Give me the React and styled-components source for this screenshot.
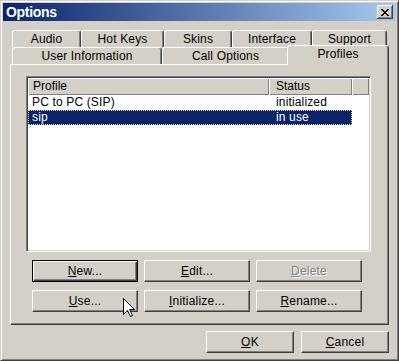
import React from "react";
import styled, { createGlobalStyle } from "styled-components";

const Global = createGlobalStyle`
  html, body { margin: 0; padding: 0; background: #d4d0c8; }
  * { box-sizing: border-box; }
`;

const FONT = `"Liberation Sans", Arial, sans-serif`;

const Window = styled.div`
  position: relative;
  width: 399px;
  height: 361px;
  background: #d4d0c8;
  border: 1px solid;
  border-color: #d4d0c8 #404040 #404040 #d4d0c8;
  box-shadow: inset 1px 1px #fff, inset -1px -1px #808080;
  padding: 2px;
  display: flex;
  flex-direction: column;
  font-family: ${FONT};
  font-size: 12px;
  color: #000;
`;

const TitleBar = styled.div`
  height: 18px;
  background: linear-gradient(to right, #0a246a, #a6caf0);
  display: flex;
  align-items: flex-start;
  justify-content: space-between;
`;

const Title = styled.div`
  color: #fff;
  font-weight: bold;
  font-size: 14px;
  letter-spacing: -0.3px;
  line-height: 18px;
  padding-left: 3px;
`;

const CloseBtn = styled.div`
  width: 16px;
  height: 14px;
  margin: 2px 3px 0 0;
  background: #d4d0c8;
  box-shadow: inset -1px -1px #404040, inset 1px 1px #fff, inset -2px -2px #808080;
  display: flex;
  align-items: center;
  justify-content: center;
`;

const Body = styled.div`
  flex: 1;
  display: flex;
  flex-direction: column;
  padding: 9px 7px 0 7px;
`;

const TabRow = styled.div`
  display: flex;
  height: 17px;
  padding-left: 2px;
`;

const Tab = styled.div`
  width: ${(p) => p.$w}px;
  height: ${(p) => (p.$active ? 20 : 17)}px;
  margin: ${(p) => (p.$active ? "-2px -2px -1px -2px" : "0")};
  ${(p) => (p.$active ? "position: relative; z-index: 1;" : "")}
  background: #d4d0c8;
  border-top: 1px solid #fff;
  border-left: 1px solid #fff;
  border-right: 1px solid #404040;
  border-top-left-radius: 3px;
  border-top-right-radius: 3px;
  box-shadow: inset -1px 0 #808080;
  display: flex;
  justify-content: center;
  align-items: flex-start;
  line-height: 14px;
  padding-top: 1px;
  white-space: nowrap;
  letter-spacing: 0.15px;
`;

const Panel = styled.div`
  height: 261px;
  border-top: 1px solid #fff;
  border-left: 1px solid #fff;
  border-right: 1px solid #404040;
  border-bottom: 1px solid #404040;
  box-shadow: inset -1px -1px #808080;
  padding: 11px 0 0 15px;
  display: flex;
  flex-direction: column;
`;

const ListBox = styled.div`
  width: 345px;
  height: 176px;
  background: #fff;
  border: 1px solid;
  border-color: #808080 #fff #fff #808080;
  box-shadow: inset 1px 1px #404040, inset -1px -1px #d4d0c8;
  padding: 1px;
  display: flex;
  flex-direction: column;
`;

const HeaderRow = styled.div`
  display: flex;
  height: 17px;
`;

const HeaderCell = styled.div`
  width: ${(p) => (p.$w ? `${p.$w}px` : "auto")};
  flex: ${(p) => (p.$w ? "none" : "1")};
  background: #d4d0c8;
  box-shadow: inset 1px 1px #fff, inset -1px -1px #808080;
  padding-left: ${(p) => p.$pad || 0}px;
  line-height: 16px;
  white-space: nowrap;
`;

const Row = styled.div`
  display: flex;
  width: 324px;
  height: 15px;
  line-height: 13px;
  background: ${(p) => (p.$sel ? "#0a246a" : "transparent")};
  color: ${(p) => (p.$sel ? "#fff" : "#000")};
  border: 1px dotted ${(p) => (p.$sel ? "#f5db95" : "transparent")};
`;

const Cell = styled.div`
  width: ${(p) => p.$w}px;
  padding-left: ${(p) => p.$pad}px;
  white-space: nowrap;
  letter-spacing: 0.15px;
`;

const ButtonGrid = styled.div`
  display: grid;
  grid-template-columns: repeat(3, 106px);
  grid-auto-rows: 22px;
  column-gap: 6px;
  row-gap: 8px;
  margin: 8px 0 0 6px;
`;

const Button = styled.div`
  background: #d4d0c8;
  border: 1px solid;
  border-color: ${(p) => (p.$default ? "#000" : "#fff #404040 #404040 #fff")};
  box-shadow: ${(p) =>
    p.$default
      ? "inset 1px 1px #fff, inset -1px -1px #404040, inset -2px -2px #808080"
      : "inset -1px -1px #808080"};
  display: flex;
  align-items: center;
  justify-content: center;
  color: ${(p) => (p.$disabled ? "#808080" : "#000")};
  text-shadow: ${(p) => (p.$disabled ? "1px 1px 0 #fff" : "none")};
  white-space: nowrap;
  letter-spacing: 0.2px;
`;

const BottomBar = styled.div`
  display: flex;
  justify-content: flex-end;
  gap: 7px;
  margin-top: 6px;
`;

const BottomButton = styled(Button)`
  width: 88px;
  height: 22px;
`;

const Cursor = styled.svg`
  position: absolute;
  left: 122px;
  top: 297px;
  width: 12px;
  height: 20px;
`;

const rowOne = [
  ["Audio", 69],
  ["Hot Keys", 83],
  ["Skins", 68],
  ["Interface", 80],
  ["Support", 75],
];

const rowTwo = [
  ["User Information", 150],
  ["Call Options", 127],
  ["Profiles", 98, true],
];

export default function App() {
  return (
    <>
      <Global />
      <Window>
        <TitleBar>
          <Title>Options</Title>
          <CloseBtn>
            <svg width="8" height="7" viewBox="0 0 8 7" shapeRendering="crispEdges">
              <path d="M0 0h2v1h-2zM6 0h2v1h-2zM1 1h2v1h-2zM5 1h2v1h-2zM2 2h4v1h-4zM3 3h2v1h-2zM2 4h4v1h-4zM1 5h2v1h-2zM5 5h2v1h-2zM0 6h2v1h-2zM6 6h2v1h-2z" fill="#000" />
            </svg>
          </CloseBtn>
        </TitleBar>
        <Body>
          <TabRow>
            {rowOne.map(([t, w]) => (
              <Tab key={t} $w={w}>{t}</Tab>
            ))}
          </TabRow>
          <TabRow>
            {rowTwo.map(([t, w, a]) => (
              <Tab key={t} $w={a ? w + 4 : w} $active={a}>{t}</Tab>
            ))}
          </TabRow>
          <Panel>
            <ListBox>
              <HeaderRow>
                <HeaderCell $w={241} $pad={5}>Profile</HeaderCell>
                <HeaderCell $w={83} $pad={7}>Status</HeaderCell>
                <HeaderCell />
              </HeaderRow>
              <Row>
                <Cell $w={240} $pad={3}>PC to PC (SIP)</Cell>
                <Cell $w={82} $pad={7}>initialized</Cell>
              </Row>
              <Row $sel>
                <Cell $w={240} $pad={3}>sip</Cell>
                <Cell $w={82} $pad={7}>in use</Cell>
              </Row>
            </ListBox>
            <ButtonGrid>
              <Button $default><span><u>N</u>ew...</span></Button>
              <Button><span><u>E</u>dit...</span></Button>
              <Button $disabled><span><u>D</u>elete</span></Button>
              <Button><span><u>U</u>se...</span></Button>
              <Button><span><u>I</u>nitialize...</span></Button>
              <Button><span><u>R</u>ename...</span></Button>
            </ButtonGrid>
          </Panel>
          <BottomBar>
            <BottomButton><span><u>O</u>K</span></BottomButton>
            <BottomButton><span><u>C</u>ancel</span></BottomButton>
          </BottomBar>
        </Body>
        <Cursor viewBox="0 0 12 20">
          <path
            d="M0.5 0.5 L0.5 16.5 L4.5 12.5 L7.5 18.5 L9.5 17.5 L6.5 11.5 L11.5 11.5 Z"
            fill="#fff"
            stroke="#000"
            strokeWidth="1"
          />
        </Cursor>
      </Window>
    </>
  );
}
